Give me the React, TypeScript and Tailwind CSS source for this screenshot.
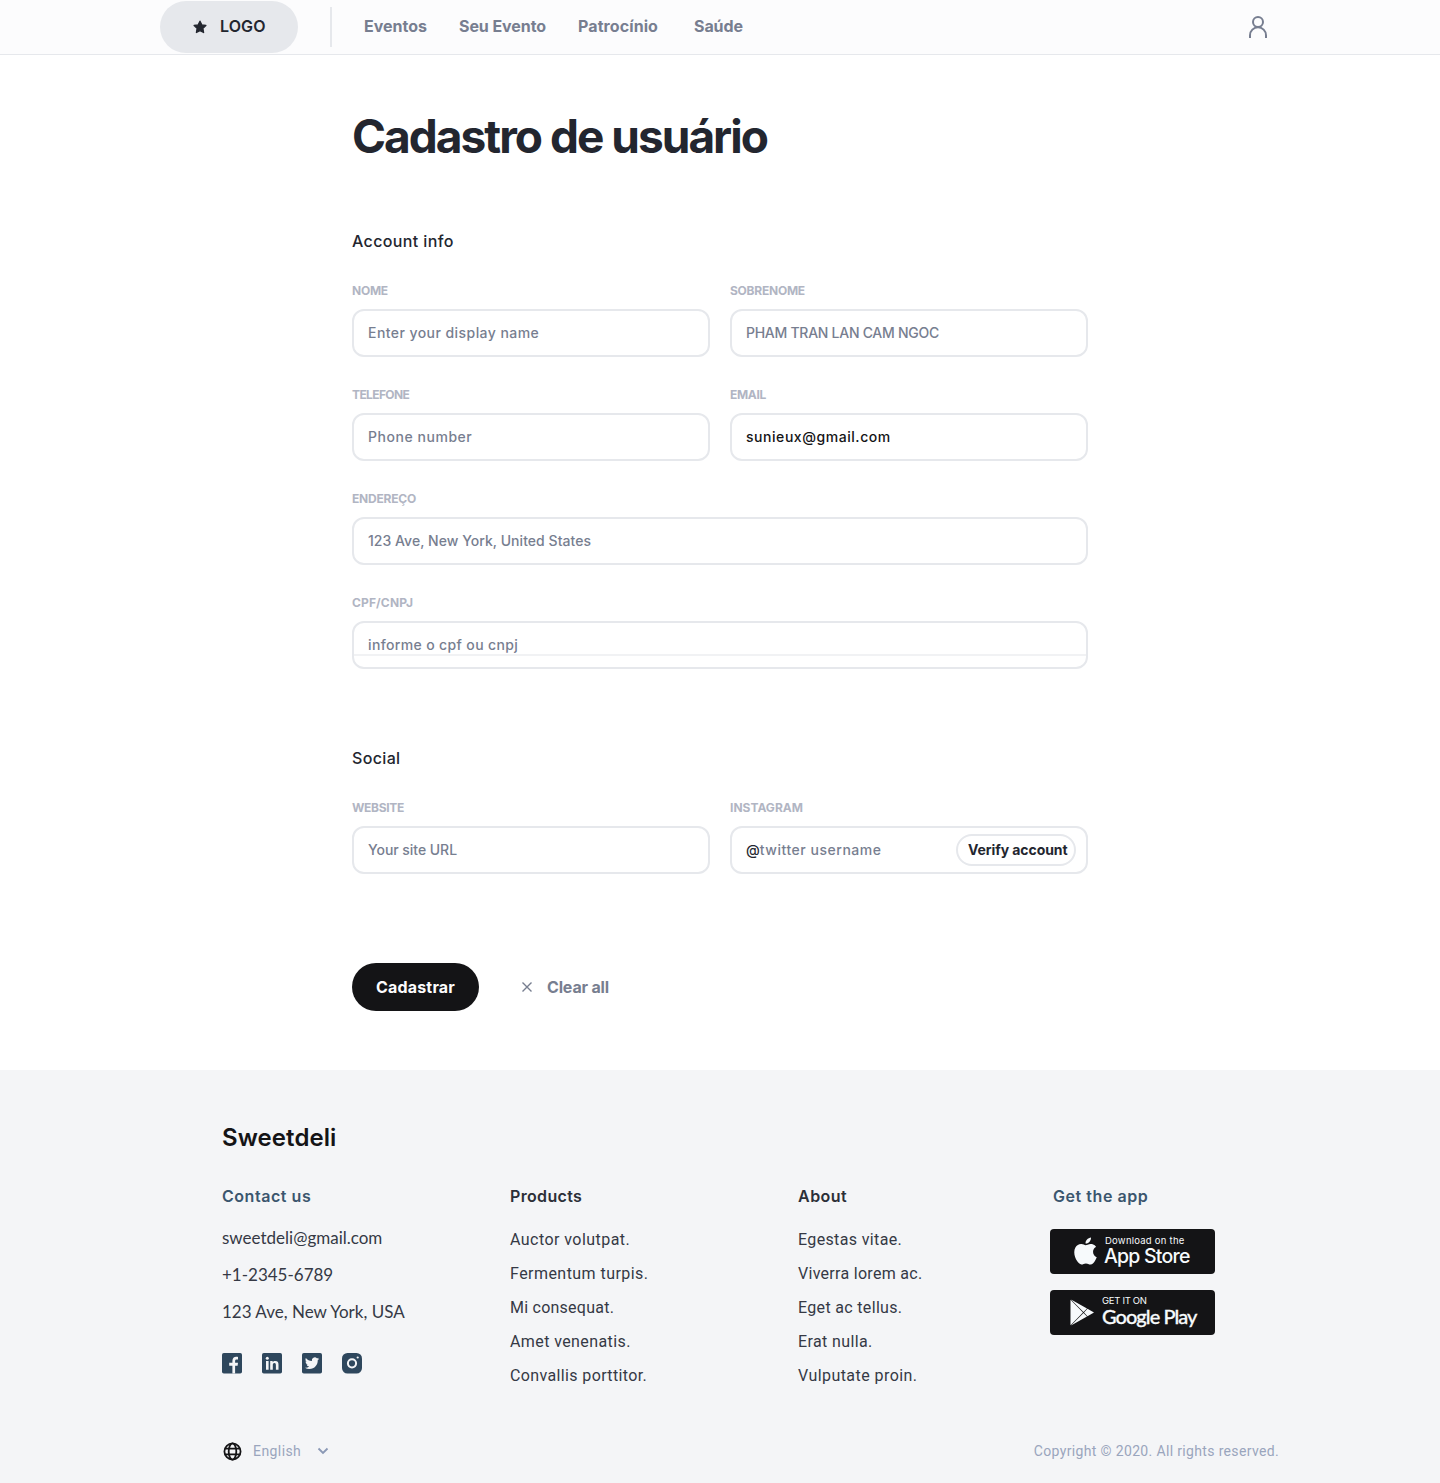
import type { ReactNode } from 'react';

type Txt = [text: string, tracking: string];

function Field({ label, tracking, wide, children }: { label: string; tracking: string; wide?: boolean; children: ReactNode }) {
  return (
    <div className={wide ? 'col-span-2' : ''}>
      <div className={`h-3 whitespace-nowrap text-[12px] font-bold leading-3 text-[#b1b5c3] ${tracking}`}>{label}</div>
      <div className="relative mt-3 flex h-12 items-center rounded-xl border-2 border-[#e6e8ec] px-3.5 text-sm font-medium text-[#777e90]">
        {children}
      </div>
    </div>
  );
}

function LinkColumn({ title, tracking, items, className }: { title: string; tracking: string; items: Txt[]; className: string }) {
  return (
    <div className={className}>
      <h3 className={`text-base font-semibold leading-6 text-[#2c2f38] ${tracking}`}>{title}</h3>
      <ul className="mt-[15px] flex flex-col font-['Roboto'] text-base leading-[34px] text-[#353945]">
        {items.map(([text, ls]) => (
          <li key={text} className={ls}>{text}</li>
        ))}
      </ul>
    </div>
  );
}

const products: Txt[] = [
  ['Auctor volutpat.', 'tracking-[0.45px]'],
  ['Fermentum turpis.', 'tracking-[0.45px]'],
  ['Mi consequat.', 'tracking-[0.24px]'],
  ['Amet venenatis.', 'tracking-[0.4px]'],
  ['Convallis porttitor.', 'tracking-[0.37px]'],
];

const about: Txt[] = [
  ['Egestas vitae.', 'tracking-[0.36px]'],
  ['Viverra lorem ac.', 'tracking-[0.29px]'],
  ['Eget ac tellus.', 'tracking-[0.33px]'],
  ['Erat nulla.', 'tracking-[0.38px]'],
  ['Vulputate proin.', 'tracking-[0.44px]'],
];

function SocialIcons() {
  return (
    <div className="flex gap-5 text-[#2e475d]">
      <svg width="20" height="21" viewBox="0 0 20 21" fill="none">
        <rect width="20" height="20.5" rx="1.8" fill="currentColor" />
        <path d="M10.4 20.5v-7.8H7.200V9.800h3.200V8c0-2.700 1.500-4.200 3.900-4.200.8 0 1.400.1 1.700.1v2.600h-1.300c-1.200 0-1.600.6-1.600 1.600v1.700h2.900l-.4 2.900h-2.500v7.800z" fill="#f4f5f7" />
      </svg>
      <svg width="20" height="21" viewBox="0 0 20 21" fill="none">
        <rect width="20" height="20.5" rx="1.8" fill="currentColor" />
        <path d="M4 8.1h2.6v8.600H4zM8.200 8.100h2.500v1.200c.5-.9 1.400-1.400 2.600-1.400 2.700 0 3.200 1.600 3.200 4v4.800h-2.600v-4.300c0-1.200-.1-2.300-1.500-2.300s-1.600 1.100-1.600 2.300v4.300H8.200z" fill="#f4f5f7" />
        <circle cx="5.3" cy="5.3" r="1.5" fill="#f4f5f7" />
      </svg>
      <svg width="20" height="21" viewBox="0 0 20 21" fill="none">
        <rect width="20" height="20.5" rx="1.8" fill="currentColor" />
        <path transform="translate(2.9 3.1) scale(.595)" d="M23.950 4.570a10 10 0 0 1-2.820.775 4.960 4.960 0 0 0 2.160-2.720c-.95.555-2 .96-3.130 1.180a4.920 4.920 0 0 0-8.380 4.480C7.690 8.100 4.070 6.130 1.640 3.160a4.900 4.900 0 0 0-.67 2.480c0 1.710.87 3.210 2.190 4.100a4.900 4.900 0 0 1-2.230-.62v.06a4.920 4.920 0 0 0 3.950 4.830 5 5 0 0 1-2.210.08 4.940 4.940 0 0 0 4.600 3.420A9.870 9.870 0 0 1 0 19.540a14 14 0 0 0 7.550 2.210c9.050 0 14-7.500 14-13.980 0-.21 0-.42-.02-.63a9.940 9.940 0 0 0 2.460-2.550z" fill="#f4f5f7" />
      </svg>
      <svg width="20" height="21" viewBox="0 0 20 21" fill="none">
        <rect width="20" height="20.5" rx="5.5" fill="currentColor" />
        <circle cx="10" cy="10.3" r="4.1" stroke="#f4f5f7" strokeWidth="2" />
        <circle cx="15.7" cy="4.5" r="1.1" fill="#f4f5f7" />
      </svg>
    </div>
  );
}

export default function App() {
  return (
    <div className="flex h-[1483px] w-[1440px] flex-col bg-white font-['Inter',sans-serif] text-[#23262f]">
      <header className="h-[55px] shrink-0 border-b border-[#e6e8ec] bg-[#fcfcfd]">
        <div className="mx-auto flex h-[54px] w-[1120px] items-center">
          <div className="flex h-[52px] w-[138px] items-center rounded-[26px] bg-[#e6e8ec] pl-8">
            <svg width="16" height="16" viewBox="0 0 16 16" fill="#23262f" stroke="#23262f" strokeWidth="1.3" strokeLinejoin="round">
              <path d="M8 2.200l1.800 3.700 4.100.6-3 2.900.7 4.100L8 11.600l-3.600 1.900.7-4.100-3-2.900 4.100-.6z" />
            </svg>
            <span className="mb-0.5 ml-3 font-semibold tracking-[0.09px]">LOGO</span>
          </div>
          <div className="ml-8 h-10 w-0.5 bg-[#e6e8ec]" />
          <nav className="mb-0.5 ml-8 flex font-bold text-[#777e90]">
            <a className="w-[95px]">Eventos</a>
            <a className="w-[119px] tracking-[-0.08px]">Seu Evento</a>
            <a className="w-[116px] tracking-[0.09px]">Patrocínio</a>
            <a className="tracking-[-0.08px]">Saúde</a>
          </nav>
          <svg className="ml-auto mr-3" width="20" height="24" viewBox="0 0 20 24" fill="none" stroke="#777e90" strokeWidth="2">
            <circle cx="10" cy="7" r="5" />
            <path d="M2 23v-2.700a8 8 0 0 1 16 0V23" />
          </svg>
        </div>
      </header>

      <main className="mx-auto h-[1015px] w-[736px] shrink-0">
        <h1 className="mt-[53px] h-14 whitespace-nowrap text-[46px] font-bold leading-[56px] tracking-[-1.98px]">Cadastro de usuário</h1>

        <h2 className="mt-[65px] h-6 text-base font-medium leading-6 tracking-[0.37px]">Account info</h2>
        <section className="mt-8 grid grid-cols-2 gap-x-5 gap-y-8">
          <Field label="NOME" tracking="tracking-[-0.25px]"><span className="tracking-[0.44px]">Enter your display name</span></Field>
          <Field label="SOBRENOME" tracking="tracking-[-0.24px]"><span className="tracking-[-0.27px]">PHAM TRAN LAN CAM NGOC</span></Field>
          <Field label="TELEFONE" tracking="tracking-[-0.61px]"><span className="tracking-[0.54px]">Phone number</span></Field>
          <Field label="EMAIL" tracking="tracking-[-0.35px]"><span className="tracking-[0.55px] text-[#141416]">sunieux@gmail.com</span></Field>
          <Field label="ENDEREÇO" tracking="tracking-[-0.22px]" wide><span className="tracking-[0.04px]">123 Ave, New York, United States</span></Field>
          <Field label="CPF/CNPJ" tracking="tracking-[0.13px]" wide>
            <span className="tracking-[0.36px]">informe o cpf ou cnpj</span>
            <span className="absolute inset-x-0 bottom-[11px] h-0.5 bg-[#f1f2f4]" />
          </Field>
        </section>

        <h2 className="mt-[77px] h-6 text-base font-medium leading-6 tracking-[0.35px]">Social</h2>
        <section className="mt-8 grid grid-cols-2 gap-x-5">
          <Field label="WEBSITE" tracking="tracking-[-0.34px]"><span className="tracking-[-0.04px]">Your site URL</span></Field>
          <Field label="INSTAGRAM" tracking="tracking-[0.02px]">
            <span className="text-[#23262f]">@</span>
            <span className="tracking-[0.53px]">twitter username</span>
            <button className="-mr-1 ml-auto flex h-8 w-[120px] items-center whitespace-nowrap rounded-full border-2 border-[#e6e8ec] pl-2.5 font-bold tracking-[-0.08px] text-[#23262f]">Verify account</button>
          </Field>
        </section>

        <div className="mt-[89px] flex items-center">
          <button className="h-12 w-[127px] rounded-full bg-[#141416] font-bold tracking-[0.19px] text-[#fcfcfd]">Cadastrar</button>
          <button className="ml-[42px] flex items-center font-bold tracking-[-0.16px] text-[#777e90]">
            <svg width="12" height="12" viewBox="0 0 12 12" stroke="#777e90" strokeWidth="1.4"><path d="M1.500 1.500l9 9M10.500 1.500l-9 9" /></svg>
            <span className="ml-[14px]">Clear all</span>
          </button>
        </div>
      </main>

      <footer className="h-[413px] shrink-0 bg-[#f4f5f7] pl-[222px] pr-[161px]">
        <div className="pt-[51px] text-2xl font-semibold leading-[34px] tracking-[0.08px] text-[#141416]">Sweetdeli</div>
        <div className="mt-[29px] flex h-[226px]">
          <div className="w-[288px]">
            <h3 className="text-base font-semibold leading-6 tracking-[0.54px] text-[#3b566e]">Contact us</h3>
            <div className="mb-[23px] mt-[11px] flex flex-col font-['Lato'] text-[17px] leading-[37px] text-[#353945]">
              <span>sweetdeli@gmail.com</span>
              <span>+1-2345-6789</span>
              <span>123 Ave, New York, USA</span>
            </div>
            <SocialIcons />
          </div>
          <LinkColumn className="w-[288px]" title="Products" tracking="tracking-[0.34px]" items={products} />
          <LinkColumn className="w-[252px]" title="About" tracking="tracking-[0.49px]" items={about} />
          <div>
            <h3 className="ml-[3px] text-base font-semibold leading-6 tracking-[0.55px] text-[#3b566e]">Get the app</h3>
            <a className="mt-[21px] flex h-[45px] w-[165px] rounded bg-[#141416] pl-6 text-[#f7fafc]">
              <svg className="mt-2" width="23" height="28" viewBox="0 0 23 28" fill="currentColor">
                <path d="M18.900 14.700c0-2.900 2.400-4.300 2.500-4.400-1.400-2-3.500-2.300-4.200-2.300-1.800-.2-3.500 1.100-4.400 1.100s-2.300-1.100-3.800-1c-1.900 0-3.700 1.100-4.700 2.900-2 3.500-.5 8.700 1.400 11.500 1 1.400 2.100 2.900 3.600 2.900s2-.9 3.700-.9 2.200.9 3.800.9 2.500-1.400 3.500-2.800c1.100-1.600 1.500-3.200 1.600-3.300-.1 0-3-1.200-3-4.600zM16 6.200c.8-1 1.300-2.300 1.200-3.700-1.100.1-2.500.8-3.300 1.700-.7.8-1.400 2.200-1.200 3.500 1.300.1 2.500-.6 3.300-1.500z" transform="translate(-3.8 -2.5) scale(1.21 1.18)" />
              </svg>
              <span className="ml-[7px] flex flex-col whitespace-nowrap">
                <span className="ml-px mt-[7px] h-2.5 text-[9.5px] leading-[10px] tracking-[0.24px]">Download on the</span>
                <span className="text-[19.5px] font-medium leading-5 tracking-[-0.78px]">App Store</span>
              </span>
            </a>
            <a className="mt-4 flex h-[45px] w-[165px] rounded bg-[#141416] pl-5 text-[#f7fafc]">
              <svg className="mt-[9px]" width="25" height="27" viewBox="0 0 25 27" fill="currentColor">
                <path d="M.5.7v25.600L13 13.500zM1 .5L13.500 13l3.500-3.500zM1 26.500L13.500 14l3.500 3.500zM17.500 9.800L14 13.500l3.500 3.700 6.500-3.700z" />
              </svg>
              <span className="ml-[7px] flex flex-col whitespace-nowrap">
                <span className="mt-[6px] h-2.5 text-[9.5px] leading-[10px] tracking-[-0.3px]">GET IT ON</span>
                <span className="font-['Lato'] text-[20px] font-medium leading-5 tracking-[-0.95px] [-webkit-text-stroke:0.3px_#f7fafc]">Google Play</span>
              </span>
            </a>
          </div>
        </div>
        <div className="mt-[31px] flex h-5 items-center font-['Roboto'] text-sm text-[#9aa5bd]">
          <svg className="ml-px" width="19" height="19" viewBox="0 0 20 20" fill="none" stroke="#141416" strokeWidth="1.9">
            <circle cx="10" cy="10" r="8.5" />
            <ellipse cx="10" cy="10" rx="4" ry="8.5" />
            <path d="M2 7h16M2 13h16" />
          </svg>
          <span className="ml-[11px] tracking-[0.42px]">English</span>
          <svg className="ml-4" width="12" height="8" viewBox="0 0 12 8" fill="none" stroke="#8a98b5" strokeWidth="1.8"><path d="M1.500 1.500L6 6l4.500-4.500" /></svg>
          <span className="ml-auto tracking-[0.345px]">Copyright © 2020. All rights reserved.</span>
        </div>
      </footer>
    </div>
  );
}
